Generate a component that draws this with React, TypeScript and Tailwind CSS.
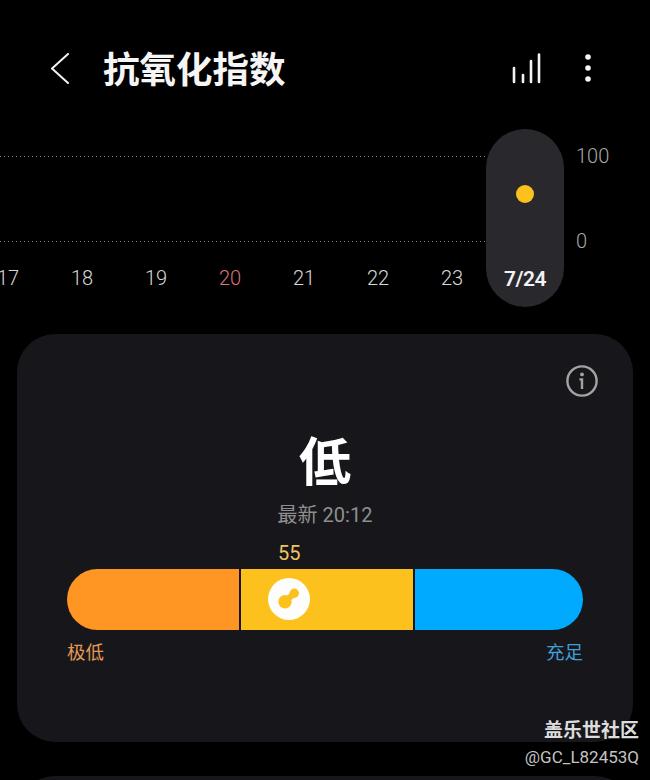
const dates = [
  { label: "17", color: "text-[#d8d8d8]" },
  { label: "18", color: "text-[#d8d8d8]" },
  { label: "19", color: "text-[#d8d8d8]" },
  { label: "20", color: "text-[#d9737a]" },
  { label: "21", color: "text-[#d8d8d8]" },
  { label: "22", color: "text-[#d8d8d8]" },
  { label: "23", color: "text-[#d8d8d8]" },
];

const fontStack = "font-['Roboto','Noto_Sans_CJK_SC',sans-serif]";
const dotted = "h-px bg-[repeating-linear-gradient(90deg,#858585_0_1px,transparent_1px_4px)]";

function Header() {
  return (
    <div className="h-[129px] pt-[11px] pl-[49px] pr-[58px] flex items-center shrink-0">
      <svg width="22" height="34" viewBox="0 0 22 34" fill="none" className="shrink-0">
        <path d="M19 1 L3 15.5 L19 30" stroke="#f2f2f2" strokeWidth="2" strokeLinecap="round" strokeLinejoin="round" />
      </svg>
      <h1 className="ml-[32px] mt-[2px] text-[36.5px] leading-[48px] font-bold text-[#f5f5f5]">抗氧化指数</h1>
      <div className="ml-auto flex items-center gap-[40px]">
        <svg width="32" height="34" viewBox="0 0 32 34" fill="none">
          <path d="M2 15 V29 M11 22 V29 M19 8 V29 M27 1.5 V29" stroke="#f2f2f2" strokeWidth="2.6" strokeLinecap="round" />
        </svg>
        <svg width="8" height="34" viewBox="0 0 8 34" fill="#f5f5f5">
          <circle cx="4" cy="4" r="2.8" />
          <circle cx="4" cy="15" r="2.8" />
          <circle cx="4" cy="26" r="2.8" />
        </svg>
      </div>
    </div>
  );
}

function Chart() {
  return (
    <div className="h-[178px] flex shrink-0">
      <div className="w-[486px] overflow-hidden">
        <div className={`mt-[27px] ${dotted}`} />
        <div className={`mt-[84px] ${dotted}`} />
        <div className="mt-[23px] -ml-[29px] flex">
          {dates.map((d) => (
            <span key={d.label} className={`w-[74px] shrink-0 text-center text-[20px] leading-[26px] font-light ${d.color}`}>
              {d.label}
            </span>
          ))}
        </div>
      </div>
      <div className="w-[78px] h-[178px] rounded-full bg-[#29292d] flex flex-col items-center">
        <div className="mt-[56px] w-[18px] h-[18px] rounded-full bg-[#fdc11d]" />
        <span className="mt-[62px] text-[21px] leading-[28px] font-semibold tracking-[-0.5px] text-[#f2f2f2]">7/24</span>
      </div>
      <div className="ml-[12px] flex flex-col text-[20px] leading-[26px] font-light text-[#a8a8a8]">
        <span className="mt-[14px]">100</span>
        <span className="mt-[59px]">0</span>
      </div>
    </div>
  );
}

function Marker() {
  return (
    <div className="absolute left-[201px] top-[9px] w-[42px] h-[42px] rounded-full bg-[#fdfdfb] flex items-center justify-center">
      <svg width="24" height="24" viewBox="0 0 24 24" fill="#fdc11d">
        <circle cx="8" cy="14.7" r="6.7" />
        <circle cx="17.3" cy="6.3" r="4.7" />
        <path d="M8 14.7 L17.3 6.3" stroke="#fdc11d" strokeWidth="6" />
      </svg>
    </div>
  );
}

function Card() {
  return (
    <div className="mx-[17px] mt-[27px] h-[408px] rounded-[38px] bg-[#17171b] shrink-0 flex flex-col">
      <div className="pt-[31px] pr-[35px] flex justify-end">
        <svg width="32" height="32" viewBox="0 0 32 32" fill="none">
          <circle cx="16" cy="16" r="14.6" stroke="#a3a3a3" strokeWidth="2.4" />
          <circle cx="16" cy="9.4" r="1.9" fill="#a3a3a3" />
          <path d="M13.4 14.4 H16 V24" stroke="#a3a3a3" strokeWidth="2.4" />
        </svg>
      </div>
      <div className="mt-[32px] text-center text-[52px] leading-[60px] font-bold text-white font-['Noto_Sans_CJK_JP',sans-serif]">低</div>
      <div className="mt-[12px] text-center text-[20px] leading-[28px] text-[#8f8f8f]">最新 20:12</div>
      <div className="mt-[12px] pl-[261px] w-[60px] box-content text-[20px] leading-[24px] text-[#eec563]">
        <span className="block w-[22px] text-center">55</span>
      </div>
      <div className="relative mt-[4px] mx-[50px] h-[61px] flex gap-[2px] rounded-full overflow-hidden">
        <div className="w-[172px] bg-[#ff9522]" />
        <div className="w-[172px] bg-[#fdc11d]" />
        <div className="flex-1 bg-[#00aaff]" />
        <Marker />
      </div>
      <div className="mt-[11px] mx-[50px] flex justify-between text-[18.5px] leading-[24px]">
        <span className="text-[#e39a55]">极低</span>
        <span className="text-[#3f9fd6]">充足</span>
      </div>
    </div>
  );
}

export default function App() {
  return (
    <div className={`relative w-[650px] h-[780px] overflow-hidden bg-black flex flex-col ${fontStack}`}>
      <Header />
      <Chart />
      <Card />
      <div className="mx-[17px] mt-[34px] h-[60px] rounded-t-[38px] bg-[#17171b] shrink-0" />
      <div className="absolute right-[11px] top-[718px] flex flex-col items-end">
        <span className="text-[19px] leading-[26px] font-bold text-[#dcdcdc]">盖乐世社区</span>
        <span className="mt-[1px] text-[17px] leading-[24px] text-[#c4c4c4]">@GC_L82453Q</span>
      </div>
    </div>
  );
}
